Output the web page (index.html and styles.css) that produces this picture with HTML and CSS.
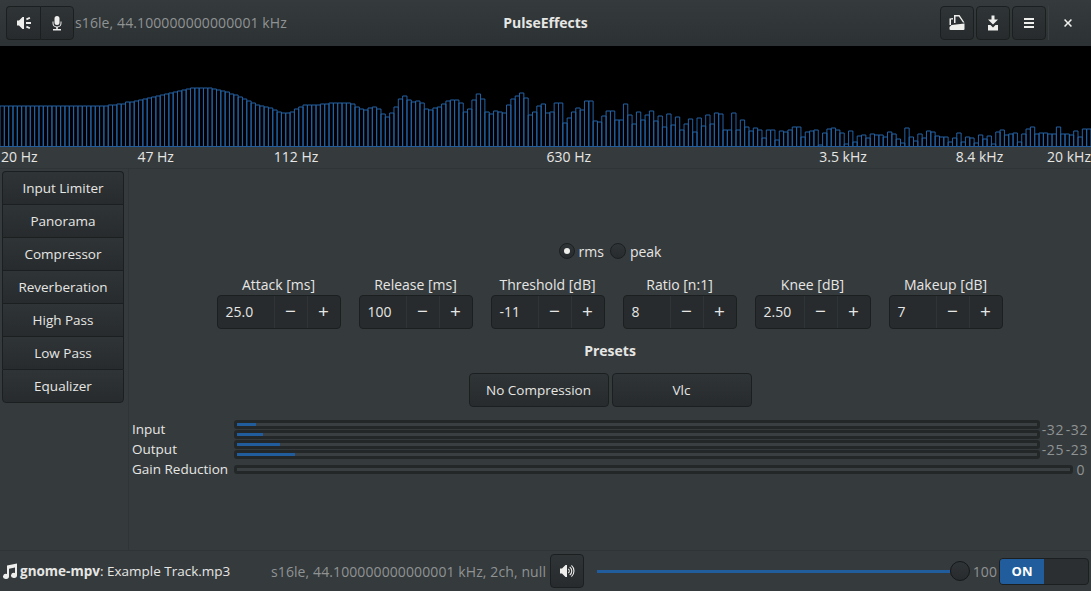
FILE: index.html

```html
<!DOCTYPE html>
<html lang="en">
<head>
  <meta charset="UTF-8" />
  <title>PulseEffects</title>
  <link rel="stylesheet" href="styles.css">
</head>
<body>
  <header class="titlebar">
    <div class="title-left">
      <div class="btn-group">
        <button class="btn icon-btn">
          <svg class="icon" viewBox="0 0 16 16"><path d="M8 2v12H6.5L3 10.5H1v-5h2L6.5 2z"/><path d="M10 7h5v2h-5zM10 3.5 13.5 2l.8 1.5-3.500 1.800zM10 12.500l3.500 1.500.800-1.500-3.500-1.800z"/></svg>
        </button>
        <button class="btn icon-btn">
          <svg class="icon" viewBox="0 0 16 16"><path d="M8 1a2.500 2.500 0 0 1 2.500 2.500v4a2.500 2.500 0 0 1-5 0v-4A2.500 2.500 0 0 1 8 1z"/><path d="M3.500 6.500h1V8a3.500 3.500 0 0 0 7 0V6.500h1V8a4.500 4.500 0 0 1-3.700 4.400V14H12v1.500H4V14h3.200v-1.600A4.500 4.500 0 0 1 3.500 8z"/></svg>
        </button>
      </div>
      <span class="dim rate">s16le, 44.100000000000001 kHz</span>
    </div>
    <div class="title-text">PulseEffects</div>
    <div class="title-right">
      <button class="btn icon-btn">
        <svg class="icon" viewBox="0 0 16 16"><path d="M.5 3.500 4 3v1.500H2V10H.5z"/><path d="M5 0h5.500L15.500 7.500H14L9.800 1.500H6.500V8H5z"/><path d="M2.500 10 15.500 8.500V14a1 1 0 0 1-1 1H1.500a1 1 0 0 1-1-1V12z"/></svg>
      </button>
      <button class="btn icon-btn">
        <svg class="icon" viewBox="0 0 16 16"><path d="M6.500 .5h3v4H13L8 9.500 3 4.500h3.500z"/><path d="M3 10h2.500L8 12.500 10.500 10H13v5.500H3z"/></svg>
      </button>
      <button class="btn icon-btn">
        <svg class="icon" viewBox="0 0 16 16"><path d="M3 3h10v2H3zM3 7h10v2H3zM3 11h10v2H3z"/></svg>
      </button>
      <span class="title-sep"></span>
      <button class="close-btn">
        <svg class="icon small" viewBox="0 0 10 10"><path d="M0 1.400 1.400 0 5 3.600 8.600 0 10 1.400 6.400 5 10 8.600 8.600 10 5 6.400 1.400 10 0 8.600 3.600 5z"/></svg>
      </button>
    </div>
  </header>

  <section class="spectrum">
    <svg id="bars" class="bars" width="1091" height="101" viewBox="0 0 1091 101"></svg>
  </section>
  <div class="freq-row">
    <span>20 Hz</span>
    <span>47 Hz</span>
    <span>112 Hz</span>
    <span class="col-5">630 Hz</span>
    <span class="col-7">3.5 kHz</span>
    <span class="last-cell"><span>8.4 kHz</span><span>20 kHz</span></span>
  </div>

  <main class="content">
    <nav class="side-list">
      <button class="side-item">Input Limiter</button>
      <button class="side-item">Panorama</button>
      <button class="side-item">Compressor</button>
      <button class="side-item">Reverberation</button>
      <button class="side-item">High Pass</button>
      <button class="side-item">Low Pass</button>
      <button class="side-item">Equalizer</button>
    </nav>

    <section class="panel">
      <div class="mode-row">
        <span class="radio checked"></span><span>rms</span>
        <span class="radio second"></span><span>peak</span>
      </div>

      <div class="spin-row">
        <div class="spin-field">
          <label>Attack [ms]</label>
          <div class="spin w124"><span class="spin-val">25.0</span><span class="spin-btn">&minus;</span><span class="spin-btn">+</span></div>
        </div>
        <div class="spin-field">
          <label>Release [ms]</label>
          <div class="spin"><span class="spin-val">100</span><span class="spin-btn">&minus;</span><span class="spin-btn">+</span></div>
        </div>
        <div class="spin-field">
          <label>Threshold [dB]</label>
          <div class="spin"><span class="spin-val">-11</span><span class="spin-btn">&minus;</span><span class="spin-btn">+</span></div>
        </div>
        <div class="spin-field">
          <label>Ratio [n:1]</label>
          <div class="spin"><span class="spin-val">8</span><span class="spin-btn">&minus;</span><span class="spin-btn">+</span></div>
        </div>
        <div class="spin-field">
          <label>Knee [dB]</label>
          <div class="spin w116"><span class="spin-val">2.50</span><span class="spin-btn">&minus;</span><span class="spin-btn">+</span></div>
        </div>
        <div class="spin-field">
          <label>Makeup [dB]</label>
          <div class="spin"><span class="spin-val">7</span><span class="spin-btn">&minus;</span><span class="spin-btn">+</span></div>
        </div>
      </div>

      <h4 class="presets-title">Presets</h4>
      <div class="presets">
        <button class="btn preset">No Compression</button>
        <button class="btn preset">Vlc</button>
      </div>

      <div class="meters">
        <div class="meter-labels">
          <span>Input</span><span>Output</span><span>Gain Reduction</span>
        </div>
        <div class="meter-bars">
          <div class="meter-row">
            <div class="meter-pair">
              <div class="level"><div class="fill" style="width: 2.4%"></div></div>
              <div class="level"><div class="fill" style="width: 3.3%"></div></div>
            </div>
            <span class="db">-32</span><span class="db">-32</span>
          </div>
          <div class="meter-row">
            <div class="meter-pair">
              <div class="level"><div class="fill" style="width: 5.4%"></div></div>
              <div class="level"><div class="fill" style="width: 7.3%"></div></div>
            </div>
            <span class="db">-25</span><span class="db">-23</span>
          </div>
          <div class="meter-row gain">
            <div class="level"></div>
            <span class="db">0</span>
          </div>
        </div>
      </div>
    </section>
  </main>

  <footer class="footer">
    <div class="app-name">
      <svg class="icon" viewBox="0 0 16 16"><path d="M5 2.500 15 .5V12.500a3 2.500 0 1 1-2-2.400V4.500L7 5.700V13.500a3 2.500 0 1 1-2-2.400z"/></svg>
      <span><b>gnome-mpv</b>: Example Track.mp3</span>
    </div>
    <span class="dim stream">s16le, 44.100000000000001 kHz, 2ch, null</span>
    <button class="btn icon-btn">
      <svg class="icon" viewBox="0 0 16 16"><path d="M8 2v12H6.500L3 10.500H1v-5h2L6.500 2z"/><path d="M9.500 5.500a3 3 0 0 1 0 5l-.5-1a2 2 0 0 0 0-3zM11 3.500a5.500 5.500 0 0 1 0 9l-.6-.9a4.500 4.500 0 0 0 0-7.200zM12.800 2a8 8 0 0 1 0 12l-.7-.8a7 7 0 0 0 0-10.400z"/></svg>
    </button>
    <div class="slider">
      <div class="slider-fill"></div>
      <div class="slider-knob"></div>
    </div>
    <span class="dim vol">100</span>
    <div class="switch">
      <span class="switch-on">ON</span>
      <span class="switch-off"></span>
    </div>
  </footer>

  <script src="spectrum.js"></script>
</body>
</html>
```

FILE: styles.css

```css
* { box-sizing: border-box; }
html, body { height: 100%; }
body {
  margin: 0;
  width: 1091px;
  height: 591px;
  overflow: hidden;
  background: #353a3c;
  color: #e6e6e4;
  font-family: 'Open Sans', 'Noto Sans', sans-serif;
  font-size: 13.5px;
  display: flex;
  flex-direction: column;
}
button { font: inherit; color: inherit; padding: 0; }
.dim { color: #8f9394; font-size: 14px; letter-spacing: 0.1px; }
.icon { width: 16px; height: 16px; fill: #eeeeec; display: block; flex: none; }
.icon.small { width: 8px; height: 8px; }

/* header */
.titlebar {
  height: 46px;
  flex: none;
  display: flex;
  align-items: center;
  justify-content: space-between;
  background: linear-gradient(#353a3c, #2c3133);
  border-radius: 5px 5px 0 0;
  padding: 0 6px;
  position: relative;
}
.title-left { display: flex; align-items: center; gap: 1px; }
.rate { margin-bottom: 2px; }
.title-text {
  position: absolute;
  top: 0;
  left: 0;
  right: 0;
  line-height: 45px;
  text-align: center;
  font-size: 14px;
  font-weight: 700;
  pointer-events: none;
}
.title-right { display: flex; align-items: center; gap: 2px; }
.btn {
  background: linear-gradient(#2f3436, #272b2d);
  border: 1px solid #1c1f1f;
  border-radius: 4px;
  display: flex;
  align-items: center;
  justify-content: center;
}
.icon-btn { width: 34px; height: 34px; flex: none; }
.btn-group { display: flex; }
.btn-group .btn:first-child { border-radius: 4px 0 0 4px; border-right: 0; }
.btn-group .btn:last-child { border-radius: 0 4px 4px 0; }
.title-sep { width: 1px; height: 34px; background: #3a3f41; }
.close-btn {
  width: 34px;
  height: 34px;
  background: none;
  border: 0;
  display: flex;
  align-items: center;
  justify-content: center;
}

/* spectrum */
.spectrum { height: 101px; flex: none; background: #000; }
.bars { display: block; }
.freq-row {
  height: 22px;
  flex: none;
  border-bottom: 1px solid #2f3436;
  display: grid;
  grid-template-columns: repeat(8, 1fr);
  font-size: 14px;
  line-height: 20px;
}
.freq-row > span { white-space: nowrap; padding-left: 1px; }
.freq-row .col-5 { grid-column: 5; }
.freq-row .col-7 { grid-column: 7; }
.freq-row .last-cell { display: flex; justify-content: space-between; }

/* main */
.content { flex: 1; display: flex; min-height: 0; }
.side-list {
  width: 129px;
  flex: none;
  padding: 2px 4px 0 2px;
  border-right: 1px solid #2f3436;
  display: flex;
  flex-direction: column;
}
.side-item {
  height: 33px;
  background: linear-gradient(#2f3436, #272b2d);
  border: 1px solid #1c1f1f;
  border-bottom: 0;
  flex: none;
}
.side-item:first-child { border-radius: 4px 4px 0 0; }
.side-item:last-child { border-bottom: 1px solid #1c1f1f; border-radius: 0 0 4px 4px; height: 34px; }
.panel {
  flex: 1;
  min-width: 0;
  display: flex;
  flex-direction: column;
  align-items: center;
  padding-top: 72px;
}
.mode-row { display: flex; align-items: center; height: 20px; gap: 4px; font-size: 14px; }
.radio {
  width: 16px;
  height: 16px;
  border-radius: 50%;
  border: 1px solid #1c1f1f;
  background: linear-gradient(#2f3436, #272b2d);
  display: flex;
  align-items: center;
  justify-content: center;
}
.radio.checked::after {
  content: "";
  width: 6px;
  height: 6px;
  border-radius: 50%;
  background: #eeeeec;
}
.radio.second { margin-left: 2px; }
.spin-row { display: flex; gap: 18px; margin: 12px 1px 0 0; }
.spin-field { display: flex; flex-direction: column; align-items: center; }
.spin-field label { padding-top: 2px; line-height: 20px; height: 22px; font-size: 14px; }
.spin {
  height: 34px;
  display: flex;
  width: 114px;
  background: #272b2d;
  border: 1px solid #1c1f1f;
  border-radius: 4px;
  font-size: 14px;
}
.spin.w124 { width: 124px; }
.spin.w116 { width: 116px; }
.spin-val { flex: 1; padding-left: 8px; line-height: 32px; }
.spin-btn {
  width: 33px;
  border-left: 1px solid #2f3436;
  text-align: center;
  font-size: 19px;
  line-height: 30px;
}
.presets-title { margin: 12px 0 0; font-size: 14px; line-height: 20px; height: 20px; font-weight: 700; }
.presets { display: flex; gap: 3px; margin-top: 12px; }
.preset { width: 140px; height: 34px; }
.meters {
  align-self: stretch;
  display: flex;
  gap: 6px;
  margin: 12px 3px 0 3px;
}
.meter-labels { display: flex; flex-direction: column; }
.meter-labels span { height: 20px; line-height: 20px; }
.meter-bars { flex: 1; min-width: 0; display: flex; flex-direction: column; }
.meter-row { height: 20px; display: flex; align-items: center; }
.meter-pair { flex: 1; display: flex; flex-direction: column; gap: 1px; }
.level {
  height: 9px;
  background: #232728;
  border-radius: 3px;
  padding: 3px;
  position: relative;
}
.level::before {
  content: "";
  position: absolute;
  left: 3px;
  right: 3px;
  top: 3px;
  height: 3px;
  background: #3a3f41;
}
.fill { height: 3px; background: #215d9c; position: relative; }
.gain .level { flex: 1; }
.db { width: 24px; text-align: right; color: #8f9394; font-size: 14px; letter-spacing: 0.6px; }
.gain .db { width: 15px; padding-right: 3px; }

/* footer */
.footer {
  height: 41px;
  flex: none;
  display: flex;
  align-items: center;
  border-top: 1px solid #2f3436;
  padding: 0 2px;
  border-radius: 0 0 5px 5px;
}
.app-name { display: flex; align-items: center; gap: 2px; width: 269px; flex: none; }
.app-name b { font-weight: 700; }
.stream { width: 279px; flex: none; }
.slider { width: 373px; flex: none; height: 22px; margin-left: 13px; display: flex; align-items: center; }
.slider-fill { height: 3px; background: #215d9c; flex: 1; }
.slider-knob {
  width: 20px;
  height: 20px;
  border-radius: 50%;
  background: linear-gradient(#2f3436, #272b2d);
  border: 1px solid #151718;
  flex: none;
}
.vol { width: 27px; text-align: right; flex: none; }
.switch {
  width: 90px;
  height: 27px;
  margin-left: 2px;
  flex: none;
  display: flex;
  border: 1px solid #1c1f1f;
  border-radius: 4px;
  overflow: hidden;
  background: #2b2f31;
}
.switch-on {
  width: 44px;
  background: #215d9c;
  color: #fff;
  font-weight: 700;
  text-align: center;
  line-height: 25px;
  font-size: 13px;
}
.switch-off { flex: 1; }
```

FILE: spectrum.js

```js
// bar tops in px from the top of the black area, left to right
const tops = [
  60,60,60,60,60,60,60,60,60,60,60,60,60,60,60,60,60,60,60,60,60,60,60,60,
  60,59,59,58,58,56,56,55,54,53,52,51,50,49,48,47,46,45,44,43,42,42,42,42,42,43,44,45,46,48,
  49,51,53,55,57,59,60,61,62,64,66,67,67,66,63,
  61,59,59,59,59,58,58,57,57,57,57,57,58,61,63,64,62,61,63,68,71,67,61,53,50,54,56,55,57,63,
  64,62,61,58,55,54,54,57,66,63,54,48,53,66,68,65,66,67,59,53,50,47,52,69,66,60,58,67,66,57,
  57,77,72,66,62,64,55,55,75,76,
  70,65,65,74,74,58,69,78,66,74,69,65,75,70,81,68,79,71,84,78,73,86,72,80,69,78,67,68,84,84,
  67,84,74,81,85,82,84,92,84,84,94,85,86,84,81,81,91,86,85,84,99,87,83,82,84,87,98,85,96,90,
  89,92,88,89,89,91,86,88,93,97,82,91,95,88,92,85,86,90,91,91,96,92,87,96,91,92,97,89,93,90,
  98,86,84,89,88,87,96,88,83,81,88,87,87,88,88,81,88,88,89,85,91,83,83
];
const svg = document.getElementById('bars');
const step = 1091 / tops.length;
let d = '';
tops.forEach((top, i) => {
  const x = (i * step).toFixed(2);
  const next = ((i + 1) * step).toFixed(2);
  d += `M${x} 101V${top}H${next}V101`;
});
svg.innerHTML = `<path d="${d}" fill="none" stroke="#2462a6" stroke-width="1"/><path d="M0 100.5H1091" stroke="#215d9c"/>`;
```
